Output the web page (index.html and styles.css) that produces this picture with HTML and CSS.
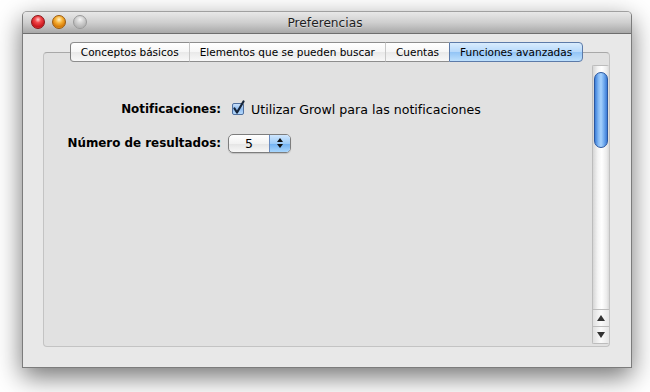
FILE: index.html
```html
<!DOCTYPE html>
<html lang="es">
	<head>
		<meta charset="UTF-8" />
		<meta name="viewport" content="width=device-width, initial-scale=1.0" />
		<title>Preferencias</title>
		<link rel="stylesheet" href="styles.css">
	</head>
	<body>
		<div class="window">
			<div class="titlebar">
				<div class="lights">
					<span class="light red"></span>
					<span class="light orange"></span>
					<span class="light gray"></span>
				</div>
				<div class="title">Preferencias</div>
			</div>
			<div class="body">
				<div class="tabs">
					<div class="tab">Conceptos básicos</div>
					<div class="tab">Elementos que se pueden buscar</div>
					<div class="tab">Cuentas</div>
					<div class="tab active">Funciones avanzadas</div>
				</div>
				<div class="tabbox">
					<div class="panel">
						<div class="row">
							<div class="label">Notificaciones:</div>
							<label class="check">
								<svg class="box" width="16" height="16" viewBox="0 0 16 16">
									<defs>
										<linearGradient id="cb" x1="0" y1="0" x2="0" y2="1">
											<stop offset="0" stop-color="#cfe4fb" />
											<stop offset="0.5" stop-color="#8dbbf0" />
											<stop offset="1" stop-color="#b9dcfd" />
										</linearGradient>
									</defs>
									<rect x="1.5" y="3.5" width="11" height="11" rx="1.5" fill="url(#cb)" stroke="#4f6f9e" />
									<path d="M3.5 8.5 L6 12.5 L12.5 1.5" fill="none" stroke="#15243a" stroke-width="2.2" stroke-linecap="round" stroke-linejoin="round" />
								</svg>
								<span>Utilizar Growl para las notificaciones</span>
							</label>
						</div>
						<div class="row">
							<div class="label">Número de resultados:</div>
							<div class="popup">
								<span class="value">5</span>
								<span class="arrows">
									<svg width="8" height="12" viewBox="0 0 8 12">
										<path d="M4 1 L7 5 L1 5 Z" fill="#111" />
										<path d="M4 11 L7 7 L1 7 Z" fill="#111" />
									</svg>
								</span>
							</div>
						</div>
					</div>
					<div class="scroll">
						<div class="track">
							<div class="thumb"></div>
						</div>
						<div class="btn up">
							<svg width="8" height="6" viewBox="0 0 8 6"><path d="M4 0 L8 6 L0 6 Z" fill="#333" /></svg>
						</div>
						<div class="btn down">
							<svg width="8" height="6" viewBox="0 0 8 6"><path d="M0 0 L8 0 L4 6 Z" fill="#333" /></svg>
						</div>
					</div>
				</div>
			</div>
		</div>
	</body>
</html>
```
FILE: styles.css
```css
body {
	margin: 0;
	width: 650px;
	height: 392px;
	background: #ffffff;
	font-family: "DejaVu Sans", sans-serif;
	color: #000;
	overflow: hidden;
}
.window {
	box-sizing: border-box;
	margin: 11px 0 0 22px;
	width: 610px;
	height: 357px;
	border: 1px solid #7c7c7c;
	border-top-color: #a0a0a0;
	border-radius: 5px 5px 0 0;
	background: #e8e8e8;
	box-shadow: 0 9px 26px rgba(0, 0, 0, 0.55);
	display: flex;
	flex-direction: column;
}
.titlebar {
	position: relative;
	height: 21px;
	flex: none;
	background: linear-gradient(#e8e8e8, #cfcfcf 50%, #a8a8a8);
	border-bottom: 1px solid #6e6e6e;
	border-radius: 4px 4px 0 0;
	display: flex;
	align-items: center;
	justify-content: center;
}
.lights {
	position: absolute;
	left: 8px;
	top: 3px;
	display: flex;
	gap: 7px;
}
.light {
	box-sizing: border-box;
	width: 14px;
	height: 14px;
	border-radius: 50%;
}
.red {
	background: radial-gradient(circle at 50% 30%, #ffd0d0 0, #f2474a 30%, #c8161c 70%, #ff6d6d 100%);
	border: 1px solid #8a1518;
}
.orange {
	background: radial-gradient(circle at 50% 30%, #fff2c8 0, #f7b237 35%, #d67a07 70%, #ffd25a 100%);
	border: 1px solid #9a5a0d;
}
.gray {
	background: radial-gradient(circle at 50% 30%, #f4f4f4 0, #cfcfcf 40%, #b3b3b3 75%, #dcdcdc 100%);
	border: 1px solid #9a9a9a;
}
.title {
	font-size: 12.2px;
	color: #1e1e1e;
	text-shadow: 0 1px 0 rgba(255, 255, 255, 0.4);
	margin-left: -4px;
}
.body {
	flex: 1;
	padding: 8px 21px 20px 20px;
	display: flex;
	flex-direction: column;
}
.tabs {
	position: relative;
	z-index: 1;
	display: flex;
	justify-content: center;
	height: 20px;
}
.tab {
	box-sizing: border-box;
	height: 20px;
	padding: 0 10px;
	font-size: 10.5px;
	line-height: 18px;
	background: linear-gradient(#ffffff, #f6f6f6 50%, #e9e9e9 51%, #f8f8f8);
	border: 1px solid #8d8d8d;
	border-left: 1px solid #c8c8c8;
	border-right: none;
}
.tab:first-child {
	border-left: 1px solid #7e7e7e;
	border-radius: 4px 0 0 4px;
}
.tab.active {
	background: linear-gradient(#d9ecfd, #b5d8fb 50%, #92c4f6 51%, #bde0fd);
	border: 1px solid #5c7aa8;
	border-radius: 0 4px 4px 0;
}
.tabbox {
	box-sizing: border-box;
	flex: 1;
	margin-top: -10px;
	background: #e1e1e1;
	border: 1px solid #c3c3c3;
	border-top-color: #a8a8a8;
	border-radius: 4px;
	display: flex;
}
.panel {
	flex: 1;
	padding-top: 46px;
	display: flex;
	flex-direction: column;
	gap: 14px;
}
.row {
	display: flex;
	align-items: center;
	height: 20px;
}
.label {
	width: 177px;
	text-align: right;
	font-size: 11.9px;
	font-weight: bold;
	margin-right: 7px;
}
.check {
	display: flex;
	align-items: center;
	font-size: 12.6px;
	margin-left: 3px;
}
.check .box {
	margin: -3px 4px 0 0;
}
.popup {
	box-sizing: border-box;
	width: 63px;
	height: 19px;
	border: 1px solid #7d7d7d;
	border-radius: 5px;
	background: linear-gradient(#ffffff, #f2f2f2 50%, #e4e4e4 51%, #f7f7f7);
	display: flex;
	overflow: hidden;
	box-shadow: 0 1px 1px rgba(0, 0, 0, 0.15);
}
.popup .value {
	flex: 1;
	text-align: center;
	font-size: 12.5px;
	line-height: 17px;
}
.popup .arrows {
	width: 20px;
	border-left: 1px solid #6a8cc0;
	background: linear-gradient(#cfe6fd, #9ccbf8 50%, #6fb0f2 51%, #a9d6fc);
	display: flex;
	align-items: center;
	justify-content: center;
}
.scroll {
	width: 16px;
	margin: 12px 0 2px 0;
	display: flex;
	flex-direction: column;
	border: 1px solid #bcbcbc;
	border-right: none;
	border-radius: 2px;
}
.track {
	flex: 1;
	background: linear-gradient(90deg, #d6d6d6, #f4f4f4 30%, #ffffff 55%, #ececec 85%, #d9d9d9);
	padding: 6px 1px 0 1px;
}
.thumb {
	box-sizing: border-box;
	height: 76px;
	border: 1px solid #2a57a0;
	border-radius: 7px;
	background: linear-gradient(90deg, #3d7fd9, #86bbf6 30%, #a6d1fc 50%, #7ab2f2 70%, #3b7bd6);
}
.btn {
	height: 16px;
	border-top: 1px solid #bcbcbc;
	background: linear-gradient(90deg, #e0e0e0, #fafafa 50%, #e6e6e6);
	display: flex;
	align-items: center;
	justify-content: center;
}
```
